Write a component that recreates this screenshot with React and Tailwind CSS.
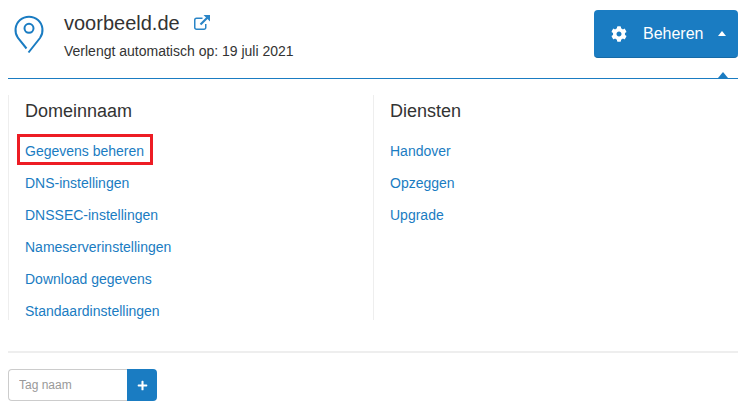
import React from "react";
import { FaCog, FaPlus } from "react-icons/fa";

const domein = ["Gegevens beheren", "DNS-instellingen", "DNSSEC-instellingen", "Nameserverinstellingen", "Download gegevens", "Standaardinstellingen"];
const diensten = ["Handover", "Opzeggen", "Upgrade"];

function Column({ title, items, className, marked }) {
  return (
    <div className={className}>
      <h2 className="text-[18px] leading-[20px] text-[#333] mb-[14px]">{title}</h2>
      <ul>
        {items.map((t) => (
          <li key={t} className="relative h-[32px] flex items-center">
            <a className="text-[14px] leading-[20px] text-[#1a7cc2]">{t}</a>
            {marked === t && (
              <span className="absolute left-[-8px] top-[-1px] w-[136px] h-[31px] border-[3px] border-[#ed1c24]" />
            )}
          </li>
        ))}
      </ul>
    </div>
  );
}

export default function App() {
  return (
    <div className="w-[749px] h-[414px] bg-white px-[8px] overflow-hidden font-['Liberation_Sans',Arial,sans-serif]">
      <header className="relative w-[730px] h-[79px] border-b border-[#1a7cc2] flex justify-between pt-[10px]">
        <div className="flex">
          <svg width="32" height="42" viewBox="0 0 32 42" fill="none" stroke="#1a7cc2" strokeWidth="2" className="ml-[5px] mt-[3px]">
            <path d="M13.500 35.500 L5 25 A13.500 13.500 0 1 1 27 25 L15.500 39.500" />
            <circle cx="16" cy="15.300" r="4.500" />
          </svg>
          <div className="ml-[19px]">
            <div className="flex items-center h-[27px]">
              <span className="text-[20px] leading-[27px] text-[#333]">voorbeeld.de</span>
              <svg width="16" height="15" viewBox="0 0 16 15" fill="none" className="ml-[14px] mt-[-2px]">
                <path d="M8.500 3.250H2.500A1.750 1.750 0 0 0 .75 5V12.500A1.750 1.750 0 0 0 2.500 14.250H10A1.750 1.750 0 0 0 11.750 12.500V9" stroke="#2a85c7" strokeWidth="1.500" />
                <path d="M14 2L6.500 9.500" stroke="#2a85c7" strokeWidth="2.200" />
                <path d="M9.500 0H16V6.500Z" fill="#2a85c7" />
              </svg>
            </div>
            <p className="mt-[4px] text-[14px] leading-[20px] text-[#333]">Verlengt automatisch op: 19 juli 2021</p>
          </div>
        </div>
        <button className="w-[144px] h-[48px] rounded-[4px] bg-[#1a7cc2] border-b border-[#166aa6] text-white flex items-center pl-[17px]">
          <FaCog className="text-[16px]" />
          <span className="ml-[16px] text-[16px]">Beheren</span>
          <span className="ml-[14px] w-0 h-0 border-x-[4px] border-x-transparent border-b-[5px] border-b-white" />
        </button>
        <span className="absolute right-[10px] bottom-0 w-0 h-0 border-x-[5px] border-x-transparent border-b-[6px] border-b-[#1a7cc2]" />
      </header>

      <section className="mt-[16px] flex h-[225px] w-[730px]">
        <Column title="Domeinnaam" items={domein} marked="Gegevens beheren" className="w-[366px] pt-[6px] pl-[16px] border-l border-r border-[#eee]" />
        <Column title="Diensten" items={diensten} className="pt-[6px] pl-[16px]" />
      </section>

      <div className="mt-[31px] w-[730px] h-[2px] bg-[#eee]" />

      <form className="mt-[16px] flex h-[32px] w-[149px]">
        <input
          placeholder="Tag naam"
          className="w-[119px] h-full rounded-l-[4px] border border-r-0 border-[#ccc] pl-[10px] text-[12px] outline-none placeholder:text-[#999]"
        />
        <button type="button" className="w-[30px] h-full rounded-r-[4px] bg-[#1a7cc2] text-white flex items-center justify-center">
          <FaPlus className="text-[11px]" />
        </button>
      </form>
    </div>
  );
}
